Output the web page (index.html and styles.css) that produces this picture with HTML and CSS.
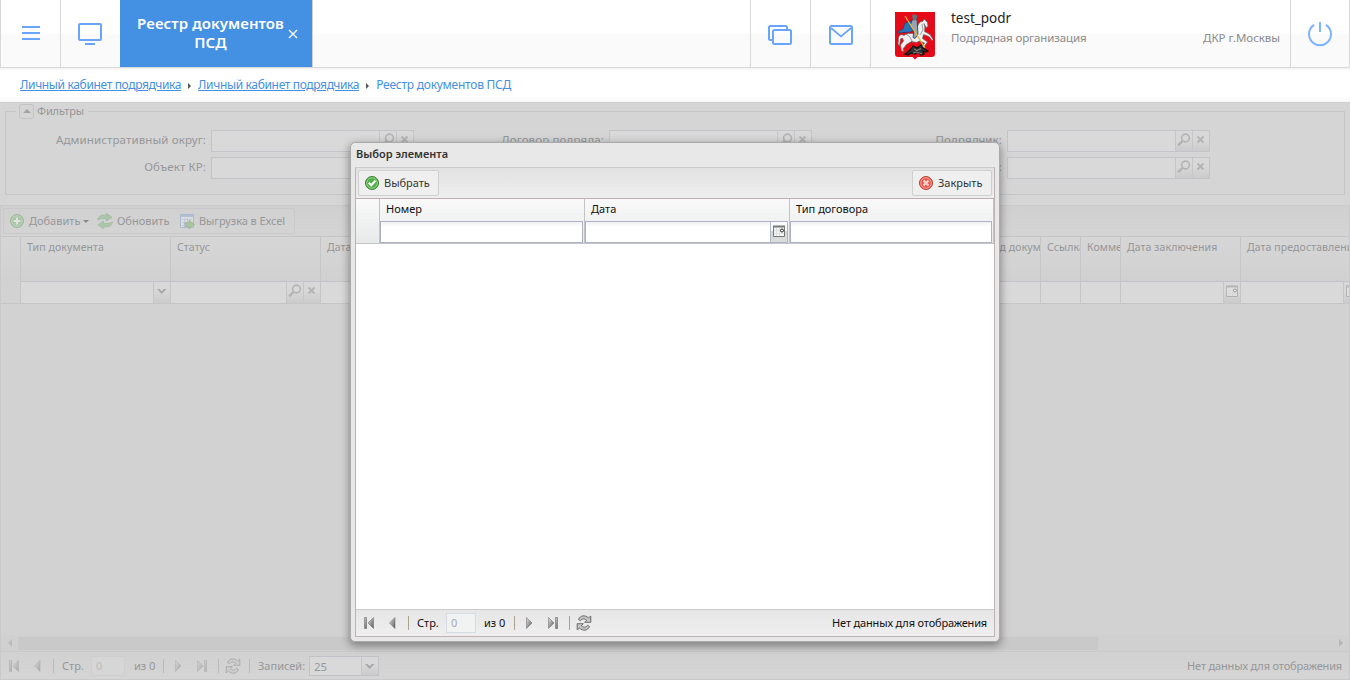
FILE: index.html
```
<!DOCTYPE html>
<html lang="ru">
<head>
<meta charset="utf-8">
<title>Реестр документов ПСД</title>
<link rel="stylesheet" href="styles.css">
</head>
<body>
<svg class="defs" width="0" height="0">
  <defs>
    <linearGradient id="metal" x1="0" y1="0" x2="1" y2="1"><stop offset="0" stop-color="#e4e4e4"/><stop offset="1" stop-color="#555"/></linearGradient>
    <symbol id="search" viewBox="0 0 16 20"><circle cx="9.5" cy="7" r="3.9" fill="none" stroke="#777" stroke-width="1.6"/><path d="M6.5 10L2.2 14.3" stroke="#777" stroke-width="2.2"/></symbol>
    <symbol id="clear" viewBox="0 0 16 20"><path d="M4.5 5.500l6 6M10.500 5.500l-6 6" stroke="#777" stroke-width="1.800"/></symbol>
    <symbol id="chevron" viewBox="0 0 16 20"><path d="M3 7h2.500l2.200 2.200L9.900 7H12.500L7.700 12z" fill="#555"/></symbol>
    <symbol id="calendar" viewBox="0 0 16 20"><path d="M2.500 4.500h11v10h-11z" fill="#f6f6f6" stroke="#777"/><path d="M2 4.500h12" stroke="#777" stroke-width="2"/><path d="M3 8.500h10M3 11.500h10M5.500 6v8M8.500 6v8" stroke="#dedede"/><circle cx="11" cy="8.500" r="1.500" fill="#fff" stroke="#222"/></symbol>
    <symbol id="first" viewBox="0 0 16 16"><path d="M3.500 2.500h2v11h-2z" fill="url(#metal)" stroke="#777" stroke-width=".7"/><path d="M12.500 2.500v11L7 8z" fill="url(#metal)" stroke="#777" stroke-width=".6"/></symbol>
    <symbol id="prev" viewBox="0 0 16 16"><path d="M11 2.500v11L5.500 8z" fill="url(#metal)" stroke="#777" stroke-width=".6"/></symbol>
    <symbol id="next" viewBox="0 0 16 16"><path d="M5.500 2.500v11L11 8z" fill="url(#metal)" stroke="#777" stroke-width=".6"/></symbol>
    <symbol id="last" viewBox="0 0 16 16"><path d="M11.500 2.500h2v11h-2z" fill="url(#metal)" stroke="#777" stroke-width=".7"/><path d="M4.500 2.500v11L10 8z" fill="url(#metal)" stroke="#777" stroke-width=".6"/></symbol>
    <symbol id="reload" viewBox="0 0 16 16"><g fill="#c4c4c4" stroke="#606060" stroke-width=".9" stroke-linejoin="round"><path d="M2.500 4.500C4 .2 9.500-.3 12.300 2.900L14.800 1.200V7.300H8.700l1.900-2C8.800 3.300 6 3.400 4.500 5.700z"/><path d="M13.500 11.500c-1.500 4.300-7 4.800-9.800 1.600L1.200 14.800V8.700H7.300l-1.900 2c1.800 2 4.600 1.900 6.100-.4z"/></g></symbol>
    <symbol id="ok" viewBox="0 0 16 16"><circle cx="8" cy="8" r="6.500" fill="#52ae49" stroke="#357f30"/><circle cx="8" cy="8" r="5.300" fill="none" stroke="#a5dc9d" stroke-width=".8"/><path d="M4.800 7.800L7.300 10.200 11.400 5.800" fill="none" stroke="#fff" stroke-width="2.200"/></symbol>
    <symbol id="close" viewBox="0 0 16 16"><circle cx="8" cy="8" r="6.500" fill="#e65b50" stroke="#bb4038"/><circle cx="8" cy="8" r="5.300" fill="none" stroke="#ffb0a6" stroke-width=".8"/><path d="M5.500 5.500l5 5M10.500 5.500l-5 5" stroke="#ffd0ca" stroke-width="2.200"/></symbol>
    <symbol id="add" viewBox="0 0 16 16"><circle cx="8" cy="8" r="6.500" fill="#5db154" stroke="#3c8b37"/><circle cx="8" cy="8" r="5.300" fill="none" stroke="#b5e0ae" stroke-width=".8"/><path d="M8 4.500v7M4.500 8h7" stroke="#fff" stroke-width="2.200"/></symbol>
    <symbol id="refresh" viewBox="0 0 16 16"><g fill="#65b467" stroke="#3d8b46" stroke-width=".7"><path d="M.5 7C1.500 2.500 6 1.200 9.500 2.200V.3L15 4.300 9.500 8V6C6.500 5 4 5.500.5 7z"/><path d="M15.500 9c-1 4.500-5.500 5.800-9 4.800v1.900L1 11.700 6.500 8v2c3 1 5.500.5 9-1z"/></g></symbol>
    <symbol id="excel" viewBox="0 0 16 16"><path d="M1.500 1.500h13v13h-13z" fill="#edf3fb" stroke="#6590cf"/><path d="M2 3h12" stroke="#79a6dc" stroke-width="2"/><path d="M3 6.500h10M3 9.500h10M3 12.500h7M5.500 5v9M8.500 5v9" stroke="#a2bcdc"/><path d="M6 9.500h4V7l5.500 4.500L10 16v-2.500H6z" fill="#63a847" stroke="#397e29" stroke-width=".6"/></symbol>
  </defs>
</svg>

<header class="topbar">
  <div class="cell menu"><svg width="20" height="20"><path d="M1 4h18M1 10h18M1 16h18" stroke="#69a5fd" stroke-width="2"/></svg></div>
  <div class="cell desktop"><svg width="26" height="26" fill="none" stroke="#69a5fd" stroke-width="2"><rect x="2" y="3" width="22" height="16" rx="1"/><path d="M8 23h10"/></svg></div>
  <div class="tab"><span class="tab-title">Реестр документов<br>ПСД</span><svg class="tab-close" width="10" height="10"><path d="M1 1l8 8M9 1L1 9" stroke="#fff" stroke-width="1.300"/></svg></div>
  <div class="grow"></div>
  <div class="cell windows"><svg width="26" height="22" fill="none" stroke="#69a5fd" stroke-width="2"><path d="M5 16H3.500Q2 16 2 14.500V3.500Q2 2 3.500 2h15Q20 2 20 3.500V5"/><rect x="6" y="6" width="18" height="14" rx="1.500"/></svg></div>
  <div class="cell"><svg width="26" height="22" fill="none" stroke="#69a5fd" stroke-width="2"><rect x="2" y="2" width="22" height="18" rx="1.500"/><path d="M3 4l10 8.500L23 4" stroke-width="1.700"/></svg></div>
  <div class="user">
    <svg class="arms" width="40" height="48" viewBox="0 0 40 48">
      <path d="M0 0h40v42q0 3-3 3H22.500L20 47.500 17.500 45H3q-3 0-3-3z" fill="#e60a18"/>
      <path d="M16 9l-6 2-2 6-6 3 1 1 12-1 5-2 3-7z" fill="#2a74b8" stroke="#143c68" stroke-width=".6"/>
      <path d="M31 9l-1.500-2-2 2.500c-2.500 0-4.500 2-5 5.500L19 22c-4-1-8-.5-10 1.500-3-2-5.500 0-5.500 3L3 32l1.500 2 1-7 2-1 1 3-3 4 1 6 2.500.5L8 37l3.500-4.500 5-3 5 1 3-1.500 5 2-3 4 2 .5 4-5.500-5-3.500 1-4 5.500 2 3 4 1-1-3-5-5.500-3c.5-3 .5-5-.5-8l2 4 2-1-.5-4z" fill="#f0f0f0" stroke="#666" stroke-width=".7"/>
      <path d="M17 8l5-.5.500 7 .5 8-3 4-2-1 1-6-4-5z" fill="#9aa3b0" stroke="#223a56" stroke-width=".8"/>
      <path d="M17 3.500Q20 1.500 22.500 4L21 8h-3z" fill="#67717d"/>
      <path d="M11 22l4 3 3 6M27 12l1 6-3 5" fill="none" stroke="#777" stroke-width=".7"/>
      <path d="M10 4L30 36" stroke="#e8b936" stroke-width="1.200"/>
      <path d="M15 38l3-4 4 2 4-3 2 3 5 3-2 1-3-1 1 3-3 1-3-3-3 2-4-1-3 2-3-1 3-2z" fill="#333" stroke="#111" stroke-width="1.200"/>
      <path d="M19 37l3 1.500 4-2M18 41l4-1 5 2" stroke="#a3a3a3" fill="none" stroke-width=".8"/>
    </svg>
    <div class="user-text"><div class="login">test_podr</div><div class="org">Подрядная организация</div></div>
    <div class="grow"></div>
    <div class="dkr">ДКР г.Москвы</div>
  </div>
  <div class="cell power"><svg width="28" height="28" fill="none" stroke="#7cb2ff" stroke-width="2"><path d="M8.200 4.800A11 11 0 1 0 19.800 4.800M14 2v10"/></svg></div>
</header>

<nav class="crumbs"><a>Личный кабинет подрядчика</a><i></i><a>Личный кабинет подрядчика</a><i></i><span>Реестр документов ПСД</span></nav>

<main class="page">
  <section class="filters">
    <div class="legend"><span class="toggle"></span><span>Фильтры</span></div>
    <div class="filter-grid">
      <label>Административный округ:</label><div class="field"><span></span><b><svg><use href="#search"/></svg></b><b><svg><use href="#clear"/></svg></b></div>
      <label>Договор подряда:</label><div class="field"><span></span><b><svg><use href="#search"/></svg></b><b><svg><use href="#clear"/></svg></b></div>
      <label>Подрядчик:</label><div class="field"><span></span><b><svg><use href="#search"/></svg></b><b><svg><use href="#clear"/></svg></b></div>
      <label>Объект КР:</label><div class="field"><span></span><b><svg><use href="#search"/></svg></b><b><svg><use href="#clear"/></svg></b></div>
      <label></label><div class="field"><span></span><b><svg><use href="#search"/></svg></b><b><svg><use href="#clear"/></svg></b></div>
      <label>:</label><div class="field"><span></span><b><svg><use href="#search"/></svg></b><b><svg><use href="#clear"/></svg></b></div>
    </div>
  </section>

  <section class="registry">
    <div class="toolbar"><div class="actions">
      <svg class="ic"><use href="#add"/></svg><span class="t-add">Добавить</span><i class="caret"></i>
      <svg class="ic"><use href="#refresh"/></svg><span class="t-ref">Обновить</span>
      <svg class="ic"><use href="#excel"/></svg><span class="t-xls">Выгрузка в Excel</span>
    </div></div>
    <div class="columns titles">
      <div></div><div>Тип документа</div><div>Статус</div><div>Дата</div><div>Вид документа</div><div>Ссылка</div><div>Комментарий</div><div>Дата заключения</div><div>Дата предоставления</div>
    </div>
    <div class="columns inputs">
      <div></div><div><b><svg><use href="#chevron"/></svg></b></div><div><b><svg><use href="#search"/></svg></b><b><svg><use href="#clear"/></svg></b></div><div></div><div></div><div></div><div></div><div><b><svg><use href="#calendar"/></svg></b></div><div><b><svg><use href="#calendar"/></svg></b></div>
    </div>
    <div class="rows"></div>
    <div class="scroll"><i class="left"></i><span></span><i class="right"></i></div>
    <div class="pager muted">
      <svg class="ic"><use href="#first"/></svg><svg class="ic"><use href="#prev"/></svg><i class="sep"></i><span class="page-label">Стр.</span><span class="num">0</span><span class="total">из 0</span><i class="sep"></i><svg class="ic"><use href="#next"/></svg><svg class="ic end"><use href="#last"/></svg><i class="sep"></i><svg class="ic"><use href="#reload"/></svg><i class="sep"></i><span class="rec">Записей:</span><div class="size"><span>25</span><b><svg><use href="#chevron"/></svg></b></div>
      <div class="grow"></div><span class="empty">Нет данных для отображения</span>
    </div>
  </section>
</main>

<div class="window">
  <div class="caption">Выбор элемента</div>
  <div class="body">
    <div class="commands">
      <div class="btn"><svg class="ic"><use href="#ok"/></svg><span>Выбрать</span></div>
      <div class="btn dismiss"><svg class="ic"><use href="#close"/></svg><span>Закрыть</span></div>
    </div>
    <div class="picker">
      <div class="gutter"></div>
      <div class="col"><span>Номер</span><div class="in"><div></div></div></div>
      <div class="col"><span>Дата</span><div class="in date"><div></div><b><svg><use href="#calendar"/></svg></b></div></div>
      <div class="col"><span>Тип договора</span><div class="in"><div></div></div></div>
    </div>
    <div class="blank"></div>
    <div class="pager">
      <svg class="ic"><use href="#first"/></svg><svg class="ic"><use href="#prev"/></svg><i class="sep"></i><span class="page-label">Стр.</span><span class="num">0</span><span class="total">из 0</span><i class="sep"></i><svg class="ic"><use href="#next"/></svg><svg class="ic end"><use href="#last"/></svg><i class="sep"></i><svg class="ic"><use href="#reload"/></svg>
      <div class="grow"></div><span class="empty">Нет данных для отображения</span>
    </div>
  </div>
</div>
</body>
</html>
```

FILE: styles.css
```
* { box-sizing: border-box; }
html, body { width: 1350px; height: 680px; overflow: hidden; }
body { margin: 0; position: relative; font: 11px/14px "Noto Sans", "Open Sans", sans-serif; color: #111; background: #fff; display: flex; flex-direction: column; }
svg { display: block; flex: none; }
.defs { position: absolute; }
.grow { flex: 1; }
span { white-space: nowrap; }
.ic { width: 16px; height: 16px; }
b { display: block; flex: none; }
b svg { width: 16px; height: 20px; }

.topbar { height: 68px; flex: none; display: flex; border: solid #d9d9d9; border-width: 0 1px 1px; background: linear-gradient(#fff 34px, #fafafa 34px); }
.cell { width: 60px; flex: none; display: flex; align-items: center; justify-content: center; border-left: 1px solid #d9d9d9; padding-top: 3px; }
.menu { border-left: 0; width: 59px; padding: 0 0 1px 1px; }
.desktop { padding: 0 1px 0 0; }
.windows { padding-right: 1px; }
.power { width: 59px; padding: 0; }
.tab { width: 193px; border-right: 1px solid #d0d0d0; background: #4490e2; color: #fff; display: flex; align-items: center; padding: 0 14px 2px 17px; }
.tab-title { width: 148px; font-size: 15px; line-height: 19px; font-weight: 600; text-align: center; letter-spacing: .08px; }
.tab-close { margin-left: 4px; margin-top: 3px; }
.user { width: 420px; display: flex; border-left: 1px solid #d9d9d9; padding: 0 10px 0 24px; }
.arms { margin-top: 12px; }
.user-text { margin-left: 16px; padding-top: 10px; }
.login { font-size: 13.5px; line-height: 17px; color: #222; }
.org, .dkr { font-size: 11.5px; line-height: 16px; color: #8b8b8b; letter-spacing: -.12px; }
.dkr { letter-spacing: -.04px; }
.org { margin-top: 3px; }
.dkr { padding-top: 30px; }

.crumbs { height: 34px; flex: none; display: flex; align-items: center; padding-left: 20px; font-size: 12px; color: #4490e2; background: linear-gradient(#f2f2f2, #fff 3px, #fff 28px, #f7f7f7); }
.crumbs a { text-decoration: underline; white-space: nowrap; letter-spacing: -.35px; }
.crumbs span { letter-spacing: -.25px; }
.crumbs i { border: 3px solid transparent; border-left: 3px solid #555; border-right: 0; margin: 1px 7px 0; }

.page { height: 578px; flex: none; display: flex; flex-direction: column; color: #969799; background: #d5d5d5; border-top: 1px solid #cdcdcd; }
.filters { margin: 8px 5px 10px; height: 84px; border: 1px solid #c5c5ca; flex: none; }
.legend { width: 72px; height: 16px; margin: -9px 0 0 10px; padding-left: 3px; background: #d5d5d5; display: flex; align-items: center; gap: 3px; font-size: 11px; letter-spacing: -.1px; }
.toggle { width: 15px; height: 15px; border: 1px solid #c3c3c3; border-radius: 3px; display: grid; place-items: center; }
.toggle::before { content: ""; border: 4px solid transparent; border-top: 0; border-bottom-color: #a3a3a3; }
.filter-grid { display: grid; grid-template-columns: 200px 203px 185px 203px 185px 203px; grid-template-rows: 22px 22px; row-gap: 5px; column-gap: 5px; margin-top: 11px; }
.filter-grid label { text-align: right; line-height: 20px; font-size: 11.5px; white-space: nowrap; letter-spacing: .12px; }
.field { height: 22px; display: flex; border: 1px solid #c4c5ca; background: #d9d9d9; }
.field span { flex: 1; }
.filters b, .registry b { width: 17px; border-left: 1px solid #c6c6c9; background: linear-gradient(#d8d8d8 40%, #cbcbcb); overflow: hidden; }
.filters svg, .registry svg { opacity: .36; }

.registry { flex: 1; display: flex; flex-direction: column; border: 1px solid #c9c9cb; background: #d2d2d2; }
.toolbar { height: 30px; flex: none; padding: 2px; background: linear-gradient(#d0d0d0, #d4d4d4); }
.actions { width: 292px; height: 26px; border: 1px solid #c9c9cb; border-radius: 2px; display: flex; align-items: center; padding-left: 5px; }
.actions .ic { margin-right: 4px; }
.t-add { width: 50px; }
.t-ref { width: 62px; }
.t-xls { letter-spacing: -.08px; }
.caret { border: 3px solid transparent; border-top-color: #888; border-bottom: 0; margin: 0 8px 0 4px; }
.columns { display: grid; grid-template-columns: 20px 150px 150px 659px 61px 40px 40px 120px 108px; flex: none; }
.columns > div { border-right: 1px solid #c6c6c9; overflow: hidden; }
.columns > div:last-child { border-right: 0; }
.titles { height: 45px; border-top: 1px solid #c6c6c9; font-size: 10.5px; letter-spacing: .1px; background: linear-gradient(#d6d6d6, #d1d1d1); }
.titles > div { padding: 3px 0 0 6px; white-space: nowrap; }
.inputs { height: 23px; border-bottom: 1px solid #c6c6c9; background: #d9d9d9; }
.inputs > div { display: flex; justify-content: flex-end; border-top: 1px solid #c2c3c8; }
.inputs > div:first-child { background: #d2d2d2; border-top: 0; }
.inputs > div:last-child b { width: 6px; }
.rows { flex: 1; }
.scroll { height: 16px; flex: none; display: flex; align-items: center; background: #d0d0d0; padding: 0 6px 0 7px; justify-content: space-between; }
.scroll span { width: 1080px; height: 13px; background: #c9c9c9; margin-right: auto; margin-left: 6px; }
.scroll i { border: 4px solid transparent; }
.scroll .left { border-right-color: #bbb; border-left: 0; }
.scroll .right { border-left-color: #b6b6b6; border-right: 0; }

.pager { height: 27px; flex: none; display: flex; align-items: center; border-top: 1px solid #cbcbcb; background: linear-gradient(#e6e6e6, #efefef); padding: 0 7px 0 5px; }
.pager .ic + .ic { margin-left: 7px; }
.sep { width: 1px; height: 14px; background: #aaa28f; margin: 0 8px; }
.sep + .ic { margin-left: -2px; }
.end { margin-right: 1px; }
.page-label { width: 29px; }
.num { width: 30px; height: 20px; border: 1px solid #d5dae3; background: #f1f2f2; color: #aaa; padding: 2px 4px; }
.total { width: 22px; margin-left: 8px; }
.empty { letter-spacing: -.16px; }
.muted { height: 28px; background: linear-gradient(#d1d1d1, #d5d5d5); border-color: #c9c9c9; }
.muted .sep { background: #bcbbb8; }
.muted .num { width: 34px; background: #d6d6d6; border-color: #cfcfd2; color: #bbb; }
.muted .total { width: 21px; margin-left: 9px; }
.muted .rec { width: 51px; }
.size { width: 70px; height: 20px; display: flex; justify-content: space-between; border: 1px solid #c1c2c8; background: #d9d9d9; font-size: 11.5px; line-height: 19px; padding-left: 4px; }

.window { position: absolute; left: 350px; top: 142px; width: 650px; height: 500px; padding: 0 4px 4px; border: 1px solid #aaa; border-radius: 5px; background: #e8e8e8; box-shadow: 0 3px 9px 1px rgba(0,0,0,.36); display: flex; flex-direction: column; }
.caption { height: 24px; flex: none; padding: 4px 1px; font-weight: 600; color: #333; }
.body { flex: 1; border: 1px solid #c0b2b3; border-top-color: #ccc; display: flex; flex-direction: column; }
.commands { height: 30px; flex: none; display: flex; justify-content: space-between; padding: 2px; background: linear-gradient(#e2e2e2, #eee); }
.btn { height: 26px; border: 1px solid #d0d0d0; border-radius: 2px; background: #efefef; display: flex; align-items: center; padding: 0 8px 0 5px; gap: 4px; width: 81px; color: #333; }
.dismiss { width: 80px; }
.picker { height: 46px; flex: none; display: grid; grid-template-columns: 24px 205px 205px 204px; border-top: 1px solid #c0afb0; border-bottom: 1px solid #c5c5c7; background: linear-gradient(#f9f9f9, #e8eaea); }
.gutter, .col { border-right: 1px solid #c3c3c5; }
.col { display: flex; flex-direction: column; justify-content: space-between; }
.col > span { padding: 3px 6px; }
.in { height: 22px; margin-right: 1px; border: 1px solid #afb2c5; background: linear-gradient(#eff2f2, #fff 5px); }
.date { display: flex; }
.date div { flex: 1; }
.date b { width: 17px; border-left: 1px solid #b5b8c8; background: linear-gradient(#fafafa 45%, #d4d4d4 45%, #ddd); overflow: hidden; }
.blank { flex: 1; background: #fff; }
```
